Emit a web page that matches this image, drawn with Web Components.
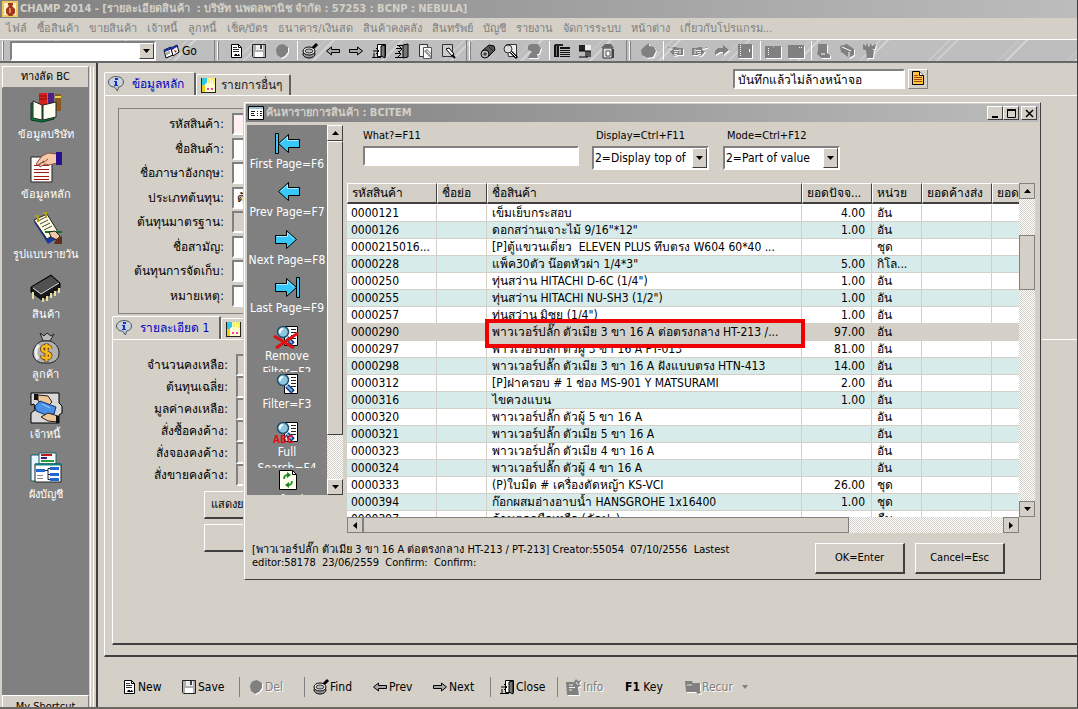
<!DOCTYPE html>
<html lang="th">
<head>
<meta charset="UTF-8">
<meta name="viewport" content="width=device-width, initial-scale=1">
<title>CHAMP 2014</title>
<style>
    :root {
        --face: #d4d0c8;
        --light: #ffffff;
        --shadow: #808080;
        --dark: #404040;
        --stripe: #d7ebea;
        --small: 11px;
        --medium: 12px;
    }
    body {
        margin: 0;
        background: var(--face);
        color: #000;
        font-family: "DejaVu Sans Condensed", "Noto Sans", sans-serif;
        font-size: 12px;
        line-height: 16px;
        overflow: hidden;
    }
</style>
</head>
<body>
<app-window>
    <title-bar slot="title" icon="vase">CHAMP 2014 - [รายละเอียดสินค้า&nbsp; : บริษัท นพดลพานิช จำกัด : 57253 : BCNP : NEBULA]</title-bar>
    <menu-bar slot="menu"></menu-bar>
    <tool-bar slot="tools"></tool-bar>
    <side-bar slot="side"></side-bar>
    <item-form></item-form>
    <action-bar slot="actions"></action-bar>
</app-window>
<search-dialog></search-dialog>

<script>
const G = '#808080';

// silhouettes used for disabled buttons: white copy one pixel down and right
const disabled = shape => `<g fill="#fff" transform="translate(1 1)">${shape}</g><g fill="${G}">${shape}</g>`;

const page = '<path d="M3.5 1.5h7l3 3v10h-10z" fill="#fff" stroke="#000"/><path d="M10.500 1.500v3h3" fill="none" stroke="#000"/>';
const lens = `<path d="M8.500 2.500h13v19h-13z" fill="#fff" stroke="#000"/><path d="M15 5.500h5M15 8.500h5M15 11.500h5M15 14.500h5M15 17.500h3" stroke="#222" stroke-width="1"/>
    <path d="M11 14l6 6" stroke="#123a78" stroke-width="5"/><path d="M11 14l5 5" stroke="#6fb4f0" stroke-width="2"/>
    <circle cx="7" cy="8" r="5.500" fill="#8cc8e0" stroke="#24506c" stroke-width="1.500"/><path d="M4 9a3 3 0 0 1 3-4" stroke="#fff" fill="none" stroke-width="2"/>`;
const bigArrow = 'M1.500 11.500L11.500 2.500V7.500H22.500V15.500H11.500V20.500Z';
const arrowArt = `<path d="${bigArrow}" fill="#38c8f8" stroke="#000"/><path d="M4 11L10.500 5V8.500H21.500" fill="none" stroke="#a8ecff"/>`;

const icons = {
    vase: [16, '<path d="M0 0h16v16H0z" fill="#f0c860"/><path d="M2 2h12v12H2z" fill="#fff0c0"/><path d="M6 2h5v2l-1 1 3 3v4l-3 3H7l-3-3V8l3-3-1-1z" fill="#a03820"/><path d="M7 7h2v5H7z" fill="#e08858"/>'],
    form: [16, '<path d="M.5 1.500h15v13H.5z" fill="#fff" stroke="#000"/><path d="M1 2h14v2H1z" fill="#9fc0c8"/><path d="M3 6.500h4M3 8.500h3M3 10.500h4M9 6.500h1M9 8.500h1M9 10.500h1M12 6.500h2M12 8.500h2M12 10.500h2" stroke="#222"/>'],
    go: [16, '<path d="M1 7l7-3 2 8-7 3z" fill="#fff" stroke="#000"/><path d="M1 7l7-3 1 2-7 3z" fill="#2030b0"/><path d="M8 5l6-3 2 7-6 4z" fill="#fff" stroke="#000"/><path d="M8 5l6-3v2L9 7z" fill="#2030b0"/><path d="M11 7l3 1-2 2z" fill="#c02020"/><path d="M4 9v3M6 8v3" stroke="#666"/>'],
    doc: [16, page + '<path d="M5 4.500h4M5 6.500h6M5 8.500h6" stroke="#333"/><path d="M6 13l1-2h4l1 2z" fill="#000"/><path d="M9 11h1v1H9z" fill="#fff"/>'],
    save: [16, '<path d="M1.500 1.500h13v13h-12l-1-1z" fill="#b0b0b0" stroke="#222"/><path d="M5 2h7v5H5z" fill="#eee"/><path d="M9 2h2v4H9z" fill="#444"/><path d="M4 9h8v5H4z" fill="#fff"/>'],
    stop: [16, disabled('<path d="M5 2l4-1 5 3v5l-3 4-4 2-4-3-1-5 1-3z"/>')],
    find: [16, '<path d="M10 6l5-5" stroke="#000" stroke-width="3"/><ellipse cx="7" cy="11" rx="6" ry="4" fill="#999" stroke="#000"/><ellipse cx="7" cy="8" rx="6" ry="4" fill="#eee" stroke="#000"/><ellipse cx="7" cy="8" rx="4" ry="2" fill="#bbb" stroke="#333"/>'],
    left: [16, '<path d="M1.500 8l5-4v2.500h8v3h-8V12z" fill="#a8a8a8" stroke="#000"/>'],
    right: [16, '<path d="M14.500 8l-5-4v2.500h-8v3h8V12z" fill="#a8a8a8" stroke="#000"/>'],
    door: [16, '<path d="M6.500 1.500h8v12h-8z" fill="#fff" stroke="#000"/><path d="M10 3l4-1v13l-4-2z" fill="#777" stroke="#000"/><path d="M2 8h6M5 5l3 3-3 3" stroke="#000" fill="none"/><path d="M1 14.500h9M3 10v4" stroke="#000"/>'],
    doors: [16, '<path d="M9 2l5-1v13l-5 1z" fill="#777" stroke="#000"/><path d="M2 5.500h6M5 3l3 3-3 3M1 10.500h6M4 8l3 3-3 3" stroke="#000" fill="none"/><path d="M3 2.500h6M1 14.500h8" stroke="#000"/>'],
    pages: [16, '<path d="M2.500 1.500h8v12h-8z" fill="#eee" stroke="#333"/><path d="M6.500 4.500h8v11h-8z" fill="#fff" stroke="#555"/><path d="M7 8l3-2 4 4v5l-3-1z" fill="#999"/><path d="M8 10l5 5M10 8l4 4" stroke="#fff"/>'],
    note: [16, '<path d="M2.500 1.500h10v12h-10z" fill="#ccc" stroke="#333"/><path d="M6 6l3-1 5 6-2 2z" fill="#fff" stroke="#000"/><path d="M12 12l3 3" stroke="#000" stroke-width="2"/>'],
    roll: [16, '<path d="M2 8l7-6 5 1 1 4-7 7z" fill="#555" stroke="#000"/><circle cx="5" cy="11" r="4" fill="#bbb" stroke="#000"/><path d="M5 9v4M3 11h4M9 4l4 4" stroke="#222"/>'],
    seek: [16, '<path d="M3.500 1.500h10v12h-8z" fill="#eee" stroke="#333"/><circle cx="5" cy="6" r="4" fill="#ddd" stroke="#333"/><path d="M8 9l6 6" stroke="#000" stroke-width="3"/><path d="M8 9l5 5" stroke="#fff"/>'],
    bell: [16, disabled('<path d="M4 1h8l3 4-2 6h-2l1 4H2l2-4 2-2-4-2V3z"/>')],
    grid: [16, '<path d="M0 2h5v12H0zM6 4h10v10H6z" fill="#111"/><path d="M6 6.500h10M6 8.500h10M6 10.500h10M6 12.500h10" stroke="#bbb"/><path d="M2.500 3v10" stroke="#777"/><path d="M0 3h9V1H1z" fill="#222"/>'],
    quad: [16, '<path d="M2 2h6v6H2z" fill="#222"/><path d="M8 2h6v6H8z" fill="#eee"/><path d="M2 8h6v6H2z" fill="#bbb"/><path d="M8 8h6v6H8z" fill="#555"/><path d="M2 8h12M2 14h9" stroke="#000"/>'],
    home: [16, '<path d="M3 5h9v10H3z" fill="#ddd" stroke="#333"/><path d="M1 5l4-4h6l3 4z" fill="#666"/><path d="M6 8h4v5H6z" fill="#fff" stroke="#555"/><path d="M13 6v9" stroke="#444" stroke-width="2"/>'],
    apple: [16, disabled('<path d="M5 3l4-3v3l5 1 2 4-3 6-6 1-5-3-1-5z"/>')],
    handL: [16, disabled('<path d="M0 4h7l4 1h4v7h-5l-4 1-2-2-2-3 3-1-1-1-4-1z"/>') + '<path d="M6 7.500h5M6 9.500h4M6 11.500h3M12 6v5M1 5h4" stroke="#eee"/>'],
    handR: [16, disabled('<path d="M16 4H9L5 5H1v7h5l4 1 2-2 2-3-3-1 1-1 4-1z"/>') + '<path d="M5 7.500h5M6 9.500h4M7 11.500h3M4 6v5M11 5h4" stroke="#eee"/>'],
    curve: [16, disabled('<path d="M1 12V8l3-3h5V2l6 5-6 5V9H6z"/>')],
    book: [16, disabled('<path d="M1 1h14v14H1z"/>') + '<path d="M3.500 2v12" stroke="#fff" stroke-dasharray="1 1"/><path d="M12 6h1v3h-1z" fill="#fff"/>'],
    folder: [16, disabled('<path d="M0 3h8l1 2V3h7v12H0z"/>') + '<path d="M3.500 5v8" stroke="#fff" stroke-dasharray="1 1"/>'],
    panel: [16, disabled('<path d="M0 2h16v13H0z"/>') + '<path d="M11 4h1v1h-1zM13 4h1v1h-1z" fill="#fff"/>'],
    mug: [16, disabled('<path d="M2 1h9v9l3 2v3H5l-4-4 1-3z"/>') + '<path d="M5 11h4" stroke="#fff"/>'],
    tag: [16, disabled('<path d="M1 3l7-2 7 5v6l-5 3-8-6z"/>') + '<path d="M3 4l9 4M10 9v5" stroke="#fff"/>'],
    plant: [16, disabled('<path d="M1 1l3 2 1-3 2 4 2-4 1 3 4-2-1 5h-3l2 1-1 8H5L4 8 1 6z"/>')],
    slip: [16, disabled('<path d="M0 3h8l2-3 2 2 3-1-2 4 2 2-3 1 1 8H1z"/>') + '<path d="M3 6h4M3 8.500h6M3 11h3M10 3l2 3" stroke="#eee"/>'],
    orange: [16, '<path d="M2.500 1.500h7l4 4v9h-11z" fill="#ffc840" stroke="#000"/><path d="M9.500 1.500v4h4" fill="#fff" stroke="#000"/><path d="M4 5.500h4M4 7.500h8M4 9.500h8M4 11.500h8" stroke="#b04010"/>'],
    info: [16, '<path d="M8 .5c4 0 7.500 2 7.500 5.500s-3 5-5 5l-1 4-3-4C3 11 .5 9 .5 6S4 .5 8 .5z" fill="#c8d0d8" stroke="#505860"/><path d="M7 2h3v2H7zM6 5h3v4h1v1H6V9h1V6H6z" fill="#1030d0"/>'],
    photo: [16, '<path d="M0 1h15v15H0z" fill="#222"/><path d="M1 1h5v7H1z" fill="#30c8e0"/><path d="M1 8h4v7H1z" fill="#e8d020"/><path d="M6 1h8v7H6z" fill="#f8f060"/><path d="M4 15V7l2-1V2h1v4h2V1h1v5h1V3h1v4l2 1v7z" fill="#fffbd0"/><path d="M6 11h2v2H6zM10 11h2v2h-2z" fill="#f040b0"/>'],
    recur: [16, disabled('<path d="M0 2h7l1 2h7v8l1 2-3 1-2-2H1z"/>') + '<path d="M2 6h5" stroke="#ddd"/>'],
    first: [26, `<path d="M1.500 1.500h3v20h-3z" fill="#38c8f8" stroke="#000"/><g transform="translate(3)">${arrowArt}</g>`],
    prev: [26, `<g transform="translate(3)">${arrowArt}</g>`],
    next: [26, `<g transform="matrix(-1 0 0 1 24 0)">${arrowArt}</g>`],
    last: [26, `<path d="M22.500 1.500h3v20h-3z" fill="#38c8f8" stroke="#000"/><g transform="matrix(-1 0 0 1 24 0)">${arrowArt}</g>`],
    filter: [26, `<g transform="translate(2)">${lens}</g>`],
    remove: [26, `<g transform="translate(2)">${lens}</g><path d="M0 12l20 12M2 24L24 9" stroke="#e01010" stroke-width="3"/>`],
    full: [26, `<g transform="translate(2)">${lens}</g><text x="-1" y="23" fill="#e01010" font-size="10" font-weight="bold">ABC</text>`],
    refresh: [26, '<path d="M5.500 2.500h13l4 4v15h-17z" fill="#fffff0" stroke="#000"/><path d="M18.500 2.500v4h4" fill="none" stroke="#000"/><path d="M10 11c0-3 2-4 4-4M18 13c0 3-2 4-4 4" fill="none" stroke="#30a030" stroke-width="2"/><path d="M13 4l4 3-4 3zM15 14l-4 3 4 3z" fill="#208020"/>'],
    books: [32, '<path d="M9 1h8v13H9z" fill="#d82018"/><path d="M18 1h6v14h-6z" fill="#502080"/><path d="M25 2h6v17h-6z" fill="#8c5a20"/><path d="M9 4h8M9 7h8" stroke="#801010"/><path d="M25 5h6" stroke="#e8d040" stroke-width="2"/><path d="M1 11l11 4 12-5v17l-12 3-11-2z" fill="#108040" stroke="#003818"/><path d="M3 9l9 4v15l-9-2zM26 10l-13 3v15l13-3z" fill="#fffdf0" stroke="#222"/>'],
    paper: [32, '<path d="M1 5h21v25H1z" fill="#fffaf8" stroke="#222"/><path d="M4 13.500h15M4 17.500h15M4 20.500h15M4 24.500h15M4 27.500h15" stroke="#a01818"/><path d="M6 12l6-8 6-3 9 1v9l-8 2-4-1-5 3-1-2 5-4-6 4z" fill="#f4c8a8" stroke="#8c5040"/><path d="M13 11l5-4" stroke="#8c5040"/><path d="M26 0h6v13h-6z" fill="#28108c"/>'],
    journal: [32, '<path d="M4 10l14 22 10-6L14 5z" fill="#1838a0"/><path d="M4 8L17 2l11 18-11 7z" fill="#fffbe0" stroke="#222"/><path d="M8 9l8-4M10 12l8-4M12 15l8-4M14 18l8-4" stroke="#444"/><path d="M5 4h3v6M13 1h3v5" stroke="#b0a010" fill="none" stroke-width="2"/><path d="M15 20h17" stroke="#107030" stroke-width="2"/><path d="M19 20l6-1 5 5-3 4-6-3z" fill="#f0c8a8" stroke="#222"/><path d="M26 27l6-3v8h-8z" fill="#60301c"/>'],
    chip: [32, '<path d="M1 15L21 3l9 8v5L12 28 1 20z" fill="#181818" stroke="#000"/><path d="M2 15L21 4l8 7-18 11z" fill="#505050"/><path d="M3 16l8 6 18-11" stroke="#ddd" fill="none"/><path d="M3 20v7M13 26v4M17 24v5M21 21v5M25 19v5M29 16v5" stroke="#e8e0a0" stroke-width="2"/>'],
    money: [32, '<path d="M10 1l4 3 3-3 4 3 3-2-4 7h-7z" fill="#b8b8b8" stroke="#222"/><path d="M12 9h8c6 2 9 7 9 12 0 6-4 9-9 10h-8c-5-1-9-4-9-10 0-5 4-10 9-12z" fill="#b0b0b0" stroke="#222"/><path d="M9 13c-4 4-4 10-1 14" stroke="#eee" stroke-width="3" fill="none"/><path id="s" d="M20.500 17c0-4-8.500-4-8.500 0s8.500 3 8.500 6.500-8.500 4-8.500 0M16.500 11.500v18" stroke="#603800" stroke-width="4" fill="none"/><path d="M20.500 17c0-4-8.500-4-8.500 0s8.500 3 8.500 6.500-8.500 4-8.500 0M16.500 12v17" stroke="#f8b820" stroke-width="2.500" fill="none"/>'],
    hands: [32, '<path d="M1 1h28v10l3 3v7l-3 2v8H1V21l4-3-1-6-3 1z" fill="#d8d8d8" stroke="#000"/><path d="M8 3l10 1 4 6-3 3-7-2-4-2z" fill="#f0c898" stroke="#222"/><path d="M5 14l5-5 16 6-2 7-8 1-10-4z" fill="#4890e8" stroke="#10306c"/><path d="M11 25l7-4 10 3v6l-10-1z" fill="#f0c898" stroke="#222"/><path d="M4 2h4v6H4zM26 24h3v7h-3z" fill="#111"/><path d="M12 12l8 4" stroke="#a8d0ff"/>'],
    chart: [32, '<path d="M1 3h9v26H1z" fill="#e8f4ff" stroke="#0c6068"/><path d="M9 1h17v11H9z" fill="#fff" stroke="#0c6068"/><path d="M11 3h11" stroke="#c01818" stroke-width="2"/><path d="M11 6h6" stroke="#401880" stroke-width="2"/><path d="M11 9h13" stroke="#20a040" stroke-width="2"/><path d="M5 12h26v18H5z" fill="#fff" stroke="#222"/><path d="M5 12.500h26" stroke="#0c8080" stroke-width="2"/><path d="M6 17h9v3H6zM20 15h9v3h-9zM20 21h9v3h-9zM20 26h9v3h-9z" fill="#2068d0"/><path d="M15 18.500h3M20 16.500h-2v11h2M18 22.500h2" stroke="#222" fill="none"/><path d="M7 23.500h6M7 26.500h6" stroke="#888"/>']
};

class UiIcon extends HTMLElement {
    constructor() {
        super();
        this.attachShadow({ mode: 'open' });
    }

    connectedCallback() {
        const [size, art] = icons[this.getAttribute('name')];
        const height = size === 26 ? 24 : size;
        this.shadowRoot.innerHTML = `
            <style>
                :host { display: inline-block; flex: none; width: ${size}px; height: ${height}px; }
                svg { display: block; overflow: visible; }
            </style>
            <svg width="${size}" height="${height}" viewBox="0 0 ${size} ${height}" aria-hidden="true">${art}</svg>
        `;
    }
}

class AppWindow extends HTMLElement {
    constructor() {
        super();
        this.attachShadow({ mode: 'open' }).innerHTML = `
            <style>
                :host {
                    display: flex;
                    flex-direction: column;
                    height: 100vh;
                    box-sizing: border-box;
                    border-right: 1px solid var(--dark);
                    border-bottom: 2px solid #6c6864;
                    overflow: hidden;
                }
                .body { flex: 1; display: flex; min-height: 0; }
                main { flex: 1; display: flex; flex-direction: column; min-width: 0; }
            </style>
            <slot name="title"></slot>
            <slot name="menu"></slot>
            <slot name="tools"></slot>
            <div class="body">
                <slot name="side"></slot>
                <main>
                    <slot></slot>
                    <slot name="actions"></slot>
                </main>
            </div>
        `;
    }
}

class TitleBar extends HTMLElement {
    constructor() {
        super();
        this.attachShadow({ mode: 'open' });
    }

    connectedCallback() {
        this.shadowRoot.innerHTML = `
            <style>
                :host {
                    display: flex;
                    align-items: center;
                    gap: 2px;
                    height: 18px;
                    padding: 0 2px;
                    background: linear-gradient(to right, #808080, #bcbcbc);
                    color: var(--face);
                    font-size: var(--small);
                    line-height: 18px;
                    font-weight: bold;
                    white-space: nowrap;
                }
                .text { flex: 1; }
            </style>
            <ui-icon name="${this.getAttribute('icon')}"></ui-icon>
            <span class="text"><slot></slot></span>
            <slot name="buttons"></slot>
        `;
    }
}

class MenuBar extends HTMLElement {
    constructor() {
        super();
        this.attachShadow({ mode: 'open' });
    }

    connectedCallback() {
        const items = ['ไฟล์', 'ซื้อสินค้า', 'ขายสินค้า', 'เจ้าหนี้', 'ลูกหนี้', 'เช็ค/บัตร', 'ธนาคาร/เงินสด', 'สินค้าคงคลัง', 'สินทรัพย์', 'บัญชี', 'รายงาน', 'จัดการระบบ', 'หน้าต่าง', 'เกี่ยวกับโปรแกรม...'];
        this.shadowRoot.innerHTML = `
            <style>
                :host { display: flex; gap: 10px; height: 21px; padding-left: 6px; align-items: center; }
                a { color: var(--shadow); text-decoration: none; font-size: var(--small); white-space: nowrap; }
            </style>
            ${items.map(item => `<a href="#">${item}</a>`).join('')}
        `;
    }
}

class DropDown extends HTMLElement {
    constructor() {
        super();
        this.attachShadow({ mode: 'open' });
    }

    connectedCallback() {
        const label = this.getAttribute('label');
        this.shadowRoot.innerHTML = `
            <style>
                :host { display: block; font-size: var(--medium); }
                label { display: block; font-size: var(--small); line-height: 18px; padding-left: 4px; margin-bottom: 1px; }
                .box {
                    display: flex;
                    height: 100%;
                    box-sizing: border-box;
                    border: 2px solid;
                    border-color: var(--shadow) var(--light) var(--light) var(--shadow);
                    background: #fff;
                }
                label + .box { height: 24px; }
                select {
                    flex: 1;
                    min-width: 0;
                    appearance: none;
                    border: 0;
                    padding: 0 1px;
                    background: #fff;
                    font: inherit;
                    text-overflow: clip;
                    outline: none;
                }
                .arrow {
                    display: grid;
                    place-items: center;
                    width: 15px;
                    box-sizing: border-box;
                    background: var(--face);
                    border: 1px solid;
                    border-color: var(--light) var(--dark) var(--dark) var(--light);
                    pointer-events: none;
                }
            </style>
            ${label ? `<label for="list">${label}</label>` : ''}
            <div class="box">
                <select id="list" aria-label="${label || 'ค้นหาเมนู'}"><option>${this.getAttribute('value') || ''}</option></select>
                <span class="arrow"><svg width="7" height="4"><path d="M0 0h7L3.500 4z"/></svg></span>
            </div>
        `;
    }
}

class ToolBar extends HTMLElement {
    constructor() {
        super();
        this.attachShadow({ mode: 'open' });
    }

    connectedCallback() {
        const groups = [
            [['doc', 'save', 'stop'], ['find', 'left', 'right', 'door', 'doors', 'pages', 'note']],
            [['roll', 'seek', 'bell'], ['grid', 'quad', 'home']],
            [['apple'], ['handL', 'handR', 'curve', 'book'], ['folder', 'panel'], ['mug', 'tag', 'plant']]
        ];
        const button = name => `<button aria-label="${name}"><ui-icon name="${name}"></ui-icon></button>`;
        this.shadowRoot.innerHTML = `
            <style>
                :host {
                    display: flex;
                    align-items: center;
                    height: 24px;
                    box-sizing: border-box;
                    border-top: 1px solid var(--light);
                    border-bottom: 2px solid #686868;
                    background:
                        repeating-linear-gradient(135deg, transparent 0 34px, #cccccc 34px 35px, transparent 35px 39px, #d2d2d2 39px 41px, transparent 41px 49px),
                        #bebebe;
                }
                drop-down { width: 146px; height: 20px; margin-right: 7px; }
                button {
                    display: flex;
                    align-items: center;
                    gap: 3px;
                    border: 0;
                    background: none;
                    padding: 0;
                    margin-right: 7px;
                    font: inherit;
                    font-size: var(--medium);
                }
                .go { width: 41px; }
                .grip, .edge, .sep { box-sizing: border-box; border-left: 1px solid #fff; height: 19px; }
                .grip { width: 2px; margin: 0 6px 0 2px; border-right: 1px solid var(--shadow); }
                .edge, .sep { width: 1px; }
                .sep { margin-right: 4px; }
                .edge { height: 21px; margin-left: 3px; border-left-color: var(--shadow); }
                .group { display: flex; align-items: center; }
                .group .grip { margin-right: 9px; }
            </style>
            <span class="grip"></span>
            <drop-down></drop-down>
            <button class="go"><ui-icon name="go"></ui-icon>Go</button>
            ${groups.map(sets => `
                <div class="group">
                    <span class="edge"></span><span class="grip"></span>
                    ${sets.map(set => set.map(button).join('')).join('<span class="sep"></span>')}
                </div>
            `).join('')}
        `;
    }
}

class SideBar extends HTMLElement {
    constructor() {
        super();
        this.attachShadow({ mode: 'open' });
    }

    connectedCallback() {
        const items = [
            ['books', 'ข้อมูลบริษัท'], ['paper', 'ข้อมูลหลัก'], ['journal', 'รูปแบบรายวัน'], ['chip', 'สินค้า'],
            ['money', 'ลูกค้า'], ['hands', 'เจ้าหนี้'], ['chart', 'ผังบัญชี']
        ];
        this.shadowRoot.innerHTML = `
            <style>
                :host {
                    display: flex;
                    flex: none;
                    width: 98px;
                    box-sizing: border-box;
                    padding: 3px 0 0 2px;
                    border-right: 2px solid var(--dark);
                    font-size: var(--small);
                }
                .list { display: flex; flex-direction: column; width: 87px; background: var(--shadow); }
                .edge { flex: 1; margin: 0 2px 0 1px; border: 1px solid; border-color: transparent var(--light); }
                .head {
                    width: 100%;
                    height: 22px;
                    box-sizing: border-box;
                    border: 1px solid;
                    border-color: var(--light) var(--shadow) var(--shadow) var(--light);
                    background: var(--face);
                    font: inherit;
                    padding: 0;
                }
                nav { flex: 1; padding-top: 4px; min-height: 0; overflow: hidden; }
                a { display: flex; flex-direction: column; align-items: center; gap: 3px; height: 60px; color: #fff; text-decoration: none; }
                .foot { height: 12px; overflow: hidden; }
                .foot .head { display: block; border-bottom: 0; }
            </style>
            <div class="list">
                <button class="head">ทางลัด BC</button>
                <nav>${items.map(([icon, text]) => `<a href="#"><ui-icon name="${icon}"></ui-icon>${text}</a>`).join('')}</nav>
                <div class="foot"><button class="head">My Shortcut</button></div>
            </div>
            <span class="edge"></span>
        `;
    }
}

class TabStrip extends HTMLElement {
    constructor() {
        super();
        this.attachShadow({ mode: 'open' });
    }

    connectedCallback() {
        const tabs = this.getAttribute('tabs').split('|');
        this.shadowRoot.innerHTML = `
            <style>
                :host { display: flex; align-items: flex-end; font-size: var(--medium); }
                button {
                    display: flex;
                    align-items: center;
                    gap: 4px;
                    height: 21px;
                    padding: 0 7px 0 4px;
                    border: 1px solid var(--light);
                    border-right: 2px solid #606060;
                    border-bottom: 0;
                    border-radius: 2px 2px 0 0;
                    background: var(--face);
                    font: inherit;
                    color: #202020;
                    white-space: nowrap;
                }
                .active { height: 24px; gap: 8px; padding: 0 10px 2px 3px; margin-bottom: -1px; color: #0000c0; }
            </style>
            ${tabs.map((tab, i) => `<button class="${i ? '' : 'active'}"><ui-icon name="${i ? 'photo' : 'info'}"></ui-icon>${tab}</button>`).join('')}
        `;
    }
}

class FieldList extends HTMLElement {
    constructor() {
        super();
        this.attachShadow({ mode: 'open' });
    }

    connectedCallback() {
        const labels = this.getAttribute('labels').split('|');
        this.shadowRoot.innerHTML = `
            <style>
                :host { display: flex; flex-direction: column; justify-content: space-between; font-size: var(--medium); }
                .row { display: grid; grid-template-columns: var(--label, 105px) 180px; column-gap: 8px; align-items: center; height: 22px; }
                label { text-align: right; white-space: nowrap; }
                input {
                    height: 22px;
                    box-sizing: border-box;
                    border: 2px solid;
                    border-color: var(--shadow) var(--light) var(--light) var(--shadow);
                    padding: 0 3px;
                    background: #fff;
                    font: inherit;
                }
                .gray { background: var(--face); }
                .need { background: #fff0f0; }
            </style>
            ${labels.map((text, i) => {
                const [label, kind = '', value = ''] = text.split('/');
                return `<div class="row"><label for="f${i}">${label}:</label><input id="f${i}" class="${kind}" value="${value}"></div>`;
            }).join('')}
        `;
    }
}

class ItemForm extends HTMLElement {
    constructor() {
        super();
        this.attachShadow({ mode: 'open' });
    }

    connectedCallback() {
        this.shadowRoot.innerHTML = `
            <style>
                :host { flex: 1; display: flex; flex-direction: column; min-height: 0; padding: 6px 0 0 6px; }
                .top { display: flex; align-items: flex-end; height: 26px; }
                .save-mode { display: flex; gap: 3px; margin: 0 149px 6px auto; }
                .save-mode input {
                    width: 172px;
                    height: 20px;
                    box-sizing: border-box;
                    border: 2px solid;
                    border-color: var(--shadow) var(--light) var(--light) var(--shadow);
                    padding: 0 3px;
                    font: inherit;
                    font-size: var(--medium);
                }
                button { border: 1px solid; border-color: var(--light) var(--shadow) var(--shadow) var(--light); background: var(--face); font: inherit; }
                .save-mode button { width: 20px; height: 20px; padding: 0 1px; }
                .panel { border: 1px solid var(--light); border-right: 0; border-bottom: 2px solid var(--dark); box-sizing: border-box; }
                .outer { flex: 1; display: flex; flex-direction: column; padding: 12px 0 10px 7px; min-height: 0; }
                .group { height: 206px; box-sizing: border-box; margin: 0 60px 2px 6px; padding: 4px 0 6px; border: 1px solid var(--shadow); display: flex; }
                .inner { flex: 1; padding: 14px 0; min-height: 0; overflow: hidden; }
                .inner field-list { --label: 115px; height: 132px; }
                .more { display: flex; flex-direction: column; gap: 5px; width: 140px; margin: 5px 0 0 91px; }
                .more button { height: 28px; text-align: left; font-size: var(--small); border-bottom: 2px solid var(--dark); }
            </style>
            <div class="top">
                <tab-strip tabs="ข้อมูลหลัก|รายการอื่นๆ"></tab-strip>
                <div class="save-mode">
                    <input value="บันทึกแล้วไม่ล้างหน้าจอ" aria-label="หลังบันทึก">
                    <button aria-label="เอกสาร"><ui-icon name="orange"></ui-icon></button>
                </div>
            </div>
            <div class="panel outer">
                <div class="group">
                    <field-list labels="รหัสสินค้า/need|ชื่อสินค้า|ชื่อภาษาอังกฤษ|ประเภทต้นทุน//ต้นทุน|ต้นทุนมาตรฐาน/gray|ชื่อสามัญ|ต้นทุนการจัดเก็บ|หมายเหตุ"></field-list>
                </div>
                <tab-strip tabs="รายละเอียด 1|อื่นๆ"></tab-strip>
                <div class="panel inner">
                    <field-list labels="จำนวนคงเหลือ/gray|ต้นทุนเฉลี่ย/gray|มูลค่าคงเหลือ/gray|สั่งซื้อคงค้าง/gray|สั่งจองคงค้าง/gray|สั่งขายคงค้าง/gray"></field-list>
                    <div class="more">
                        <button>แสดงยอด</button>
                        <button aria-label="เพิ่มเติม"></button>
                    </div>
                </div>
            </div>
        `;
    }
}

class ActionBar extends HTMLElement {
    constructor() {
        super();
        this.attachShadow({ mode: 'open' });
    }

    connectedCallback() {
        const items = [
            ['doc', 'New', 60], ['save', 'Save', 58], ['stop', 'Del', 65, 'off sep'], ['find', 'Find', 68, 'sep'],
            ['left', 'Prev', 60], ['right', 'Next', 58], ['door', 'Close', 67, 'sep'], ['slip', 'Info', 68, 'off sep'],
            ['', '<b>F1</b> Key', 60], ['recur', 'Recur', 70, 'off']
        ];
        this.shadowRoot.innerHTML = `
            <style>
                :host { display: flex; align-items: center; height: 50px; padding: 11px 0 1px 23px; box-sizing: border-box; }
                button {
                    display: flex;
                    align-items: center;
                    gap: 1px;
                    height: 20px;
                    padding: 0;
                    border: 0;
                    background: none;
                    font: inherit;
                    font-size: var(--medium);
                    white-space: nowrap;
                    box-sizing: border-box;
                }
                .sep { border-left: 1px solid var(--shadow); padding-left: 8px; }
                .off { color: var(--shadow); text-shadow: 1px 1px #fff; }
                .arrow { margin-left: 8px; }
            </style>
            ${items.map(([icon, text, width, kind = '']) => `
                <button class="${kind}" style="width: ${width}px">${icon ? `<ui-icon name="${icon}"></ui-icon>` : ''}<span>${text}</span>${text === 'Recur' ? '<svg class="arrow" width="6" height="4"><path d="M0 0h6L3 4z" fill="#808080"/></svg>' : ''}</button>
            `).join('')}
        `;
    }
}

class ScrollBar extends HTMLElement {
    constructor() {
        super();
        this.attachShadow({ mode: 'open' });
    }

    connectedCallback() {
        const across = this.hasAttribute('across');
        const arrows = across ? ['M4 0v7L0 3.500z', 'M0 0v7L4 3.500z'] : ['M0 4h7L3.500 0z', 'M0 0h7L3.500 4z'];
        const svg = d => `<svg width="${across ? 4 : 7}" height="${across ? 7 : 4}"><path d="${d}"/></svg>`;
        this.shadowRoot.innerHTML = `
            <style>
                :host { display: flex; flex-direction: ${across ? 'row' : 'column'}; flex: none; background: repeating-conic-gradient(#fff 0 25%, var(--face) 0 50%) 0 0 / 2px 2px; }
                button, .thumb { box-sizing: border-box; border: 1px solid var(--shadow); background: var(--face); padding: 0; }
                :host([raised]) button, :host([raised]) .thumb { border-color: var(--light) var(--dark) var(--dark) var(--light); }
                button { display: grid; place-items: center; width: 16px; height: 16px; flex: none; }
                .before { flex: ${this.getAttribute('before')}; }
                .thumb { flex: ${this.getAttribute('thumb')}; }
                .after { flex: ${this.getAttribute('after')}; }
            </style>
            <button aria-label="ก่อนหน้า">${svg(arrows[0])}</button>
            <span class="before"></span><span class="thumb"></span><span class="after"></span>
            <button aria-label="ถัดไป">${svg(arrows[1])}</button>
        `;
    }
}

const rows = [
    ['0000121', 'เข็มเย็บกระสอบ', '4.00', 'อัน'],
    ['0000126', 'ดอกสว่านเจาะไม้ 9/16"*12"', '1.00', 'อัน'],
    ['0000215016...', '[P]ตู้แขวนเดี่ยว&nbsp; ELEVEN PLUS ทึบตรง W604 60*40 ...', '', 'ชุด'],
    ['0000228', 'แพ็ค30ตัว น๊อตหัวผ่า 1/4*3"', '5.00', 'กิโล...'],
    ['0000250', 'ทุ่นสว่าน HITACHI D-6C (1/4")', '1.00', 'อัน'],
    ['0000255', 'ทุ่นสว่าน HITACHI NU-SH3 (1/2")', '1.00', 'อัน'],
    ['0000257', 'ทุ่นสว่าน มิซูย (1/4")', '1.00', 'อัน'],
    ['0000290', 'พาวเวอร์ปลั๊ก ตัวเมีย 3 ขา 16 A ต่อตรงกลาง HT-213 /...', '97.00', 'อัน'],
    ['0000297', 'พาวเวอร์ปลั๊ก ตัวผู้ 3 ขา 16 A PT-013', '81.00', 'อัน'],
    ['0000298', 'พาวเวอร์ปลั๊ก ตัวเมีย 3 ขา 16 A ฝังแบบตรง HTN-413', '14.00', 'อัน'],
    ['0000312', '[P]ฝาครอบ # 1 ช่อง MS-901 Y MATSURAMI', '2.00', 'อัน'],
    ['0000316', 'ไขควงแบน', '1.00', 'อัน'],
    ['0000320', 'พาวเวอร์ปลั๊ก ตัวผู้ 5 ขา 16 A', '', 'อัน'],
    ['0000321', 'พาวเวอร์ปลั๊ก ตัวเมีย 5 ขา 16 A', '', 'อัน'],
    ['0000323', 'พาวเวอร์ปลั๊ก ตัวเมีย 4 ขา 16 A', '', 'อัน'],
    ['0000324', 'พาวเวอร์ปลั๊ก ตัวผู้ 4 ขา 16 A', '', 'อัน'],
    ['0000333', '(P)ใบมีด # เครื่องตัดหญ้า KS-VCI', '26.00', 'ชุด'],
    ['0000394', 'ก๊อกผสมอ่างอาบน้ำ HANSGROHE 1x16400', '1.00', 'ชุด'],
    ['0000397', 'ด้ามตอกมือเหลือ (ดัดปะ)', '', 'คืบ']
];

class DataGrid extends HTMLElement {
    constructor() {
        super();
        this.attachShadow({ mode: 'open' });
    }

    connectedCallback() {
        const heads = ['รหัสสินค้า', 'ชื่อย่อ', 'ชื่อสินค้า', 'ยอดปัจจ...', 'หน่วย', 'ยอดค้างส่ง', 'ยอดค้างรับ'];
        const widths = [90, 50, 315, 70, 50, 70, 70];
        this.shadowRoot.innerHTML = `
            <style>
                :host { display: grid; grid-template-columns: 1fr 16px; grid-template-rows: 334px 16px; font-size: var(--medium); }
                .view { overflow: hidden; background: #fff; }
                table { table-layout: fixed; border-collapse: separate; border-spacing: 0; width: 715px; }
                th, td { padding: 0; overflow: hidden; white-space: nowrap; box-sizing: border-box; }
                th {
                    height: 21px;
                    padding-left: 4px;
                    text-align: left;
                    font-weight: normal;
                    background: var(--face);
                    border: 1px solid;
                    border-color: var(--light) var(--dark) var(--dark) var(--light);
                    border-bottom-width: 2px;
                }
                tbody::before { content: ""; display: block; height: 1px; }
                td { height: 17px; line-height: 16px; padding-left: 4px; border: 0 solid var(--face); border-width: 0 1px 1px 0; }
                td:nth-child(3), td:nth-child(5) { padding-left: 5px; }
                tr:nth-child(even) td { background: var(--stripe); }
                td:nth-child(4) { text-align: right; padding-right: 6px; }
                tr.current td { background: var(--face); }
                tr.current td:nth-child(3) { overflow: visible; position: relative; }
                .mark { position: absolute; inset: -5px -4px -8px -2px; border: 4px solid #f00000; background: var(--face); padding: 1px 0 0 3px; }
            </style>
            <div class="view">
                <table>
                    <colgroup>${widths.map(w => `<col style="width: ${w}px">`).join('')}</colgroup>
                    <thead><tr>${heads.map(h => `<th>${h}</th>`).join('')}</tr></thead>
                    <tbody>
                        ${rows.map(([code, name, total, unit]) => {
                            const current = code === '0000290';
                            return `<tr class="${current ? 'current' : ''}"><td>${code}</td><td></td><td>${current ? `<span class="mark">${name}</span>` : name}</td><td>${total}</td><td>${unit}</td><td></td><td></td></tr>`;
                        }).join('')}
                    </tbody>
                </table>
            </div>
            <scroll-bar before="36" thumb="54" after="212"></scroll-bar>
            <scroll-bar across before="0" thumb="486" after="154"></scroll-bar>
        `;
    }
}

class PagerNav extends HTMLElement {
    constructor() {
        super();
        this.attachShadow({ mode: 'open' });
    }

    connectedCallback() {
        const items = [
            ['first', 'First Page=F6'], ['prev', 'Prev Page=F7'], ['next', 'Next Page=F8'], ['last', 'Last Page=F9'],
            ['remove', 'Remove<br>Filter=F2'], ['filter', 'Filter=F3'], ['full', 'Full<br>Search=F4'], ['refresh', 'Refresh']
        ];
        this.shadowRoot.innerHTML = `
            <style>
                :host { display: flex; height: 370px; }
                nav { width: 80px; box-sizing: border-box; padding-top: 7px; background: var(--shadow); overflow: hidden; }
                button {
                    display: flex;
                    flex-direction: column;
                    align-items: center;
                    justify-content: flex-start;
                    width: 80px;
                    height: 48px;
                    padding: 0;
                    border: 0;
                    background: none;
                    color: #fff;
                    font: inherit;
                    font-size: var(--medium);
                    line-height: 16px;
                    white-space: nowrap;
                    overflow: hidden;
                }
                scroll-bar { width: 16px; }
            </style>
            <nav>${items.map(([icon, text]) => `<button><ui-icon name="${icon}"></ui-icon><span>${text}</span></button>`).join('')}</nav>
            <scroll-bar raised before="0" thumb="294" after="44"></scroll-bar>
        `;
    }
}

class SearchDialog extends HTMLElement {
    constructor() {
        super();
        this.attachShadow({ mode: 'open' });
    }

    connectedCallback() {
        this.shadowRoot.innerHTML = `
            <style>
                :host {
                    position: absolute;
                    left: 243px;
                    right: 36px;
                    top: 101px;
                    box-sizing: border-box;
                    padding: 1px;
                    border: 2px solid;
                    border-color: var(--light) var(--dark) var(--dark) var(--light);
                    outline: 1px solid var(--face);
                    outline-offset: -1px;
                    background: var(--face);
                }
                .buttons { display: flex; }
                .buttons button { width: 16px; height: 14px; padding: 0; display: grid; place-items: center; }
                .buttons button:last-child { margin-left: 2px; }
                button {
                    border: 1px solid;
                    border-color: var(--light) var(--dark) var(--dark) var(--light);
                    background: var(--face);
                    font: inherit;
                    font-size: var(--small);
                }
                .body { display: flex; gap: 4px; padding: 3px 4px 0 1px; }
                .right { flex: 1; min-width: 0; }
                form { display: flex; height: 58px; padding: 2px 0 0 16px; box-sizing: border-box; }
                .what { width: 216px; margin-right: 13px; }
                .what label { display: block; font-size: var(--small); line-height: 18px; margin-bottom: 1px; }
                .what input {
                    width: 100%;
                    height: 20px;
                    box-sizing: border-box;
                    border: 2px solid;
                    border-color: var(--shadow) var(--light) var(--light) var(--shadow);
                }
                drop-down { width: 117px; margin-right: 14px; }
                footer { display: flex; align-items: flex-start; gap: 10px; padding: 10px 34px 4px 6px; }
                p { flex: 1; margin: 0; font-size: var(--small); line-height: 13px; }
                footer button { width: 90px; height: 31px; border-width: 1px 2px 2px 1px; }
            </style>
            <title-bar icon="form">ค้นหารายการสินค้า : BCITEM
                <div class="buttons" slot="buttons">
                    <button aria-label="ย่อ"><svg width="9" height="9"><path d="M1 7h6v2H1z"/></svg></button>
                    <button aria-label="ขยาย"><svg width="9" height="9"><path d="M.5 1h8v7.500h-8z" fill="none" stroke="#000"/><path d="M0 0h9v2H0z"/></svg></button>
                    <button aria-label="ปิด"><svg width="9" height="9"><path d="M1 1l7 7M8 1L1 8" stroke="#000" stroke-width="1.500"/></svg></button>
                </div>
            </title-bar>
            <div class="body">
                <pager-nav></pager-nav>
                <div class="right">
                    <form>
                        <div class="what"><label for="what">What?=F11</label><input id="what"></div>
                        <drop-down label="Display=Ctrl+F11" value="2=Display top of"></drop-down>
                        <drop-down label="Mode=Ctrl+F12" value="2=Part of value"></drop-down>
                    </form>
                    <data-grid></data-grid>
                </div>
            </div>
            <footer>
                <p>[พาวเวอร์ปลั๊ก ตัวเมีย 3 ขา 16 A ต่อตรงกลาง HT-213 / PT-213] Creator:55054&nbsp; 07/10/2556&nbsp; Lastest<br>editor:58178&nbsp; 23/06/2559&nbsp; Confirm:&nbsp; Confirm:</p>
                <button>OK=Enter</button>
                <button>Cancel=Esc</button>
            </footer>
        `;
    }
}

customElements.define('ui-icon', UiIcon);
customElements.define('app-window', AppWindow);
customElements.define('title-bar', TitleBar);
customElements.define('menu-bar', MenuBar);
customElements.define('drop-down', DropDown);
customElements.define('tool-bar', ToolBar);
customElements.define('side-bar', SideBar);
customElements.define('tab-strip', TabStrip);
customElements.define('field-list', FieldList);
customElements.define('item-form', ItemForm);
customElements.define('action-bar', ActionBar);
customElements.define('scroll-bar', ScrollBar);
customElements.define('data-grid', DataGrid);
customElements.define('pager-nav', PagerNav);
customElements.define('search-dialog', SearchDialog);
</script>
</body>
</html>
